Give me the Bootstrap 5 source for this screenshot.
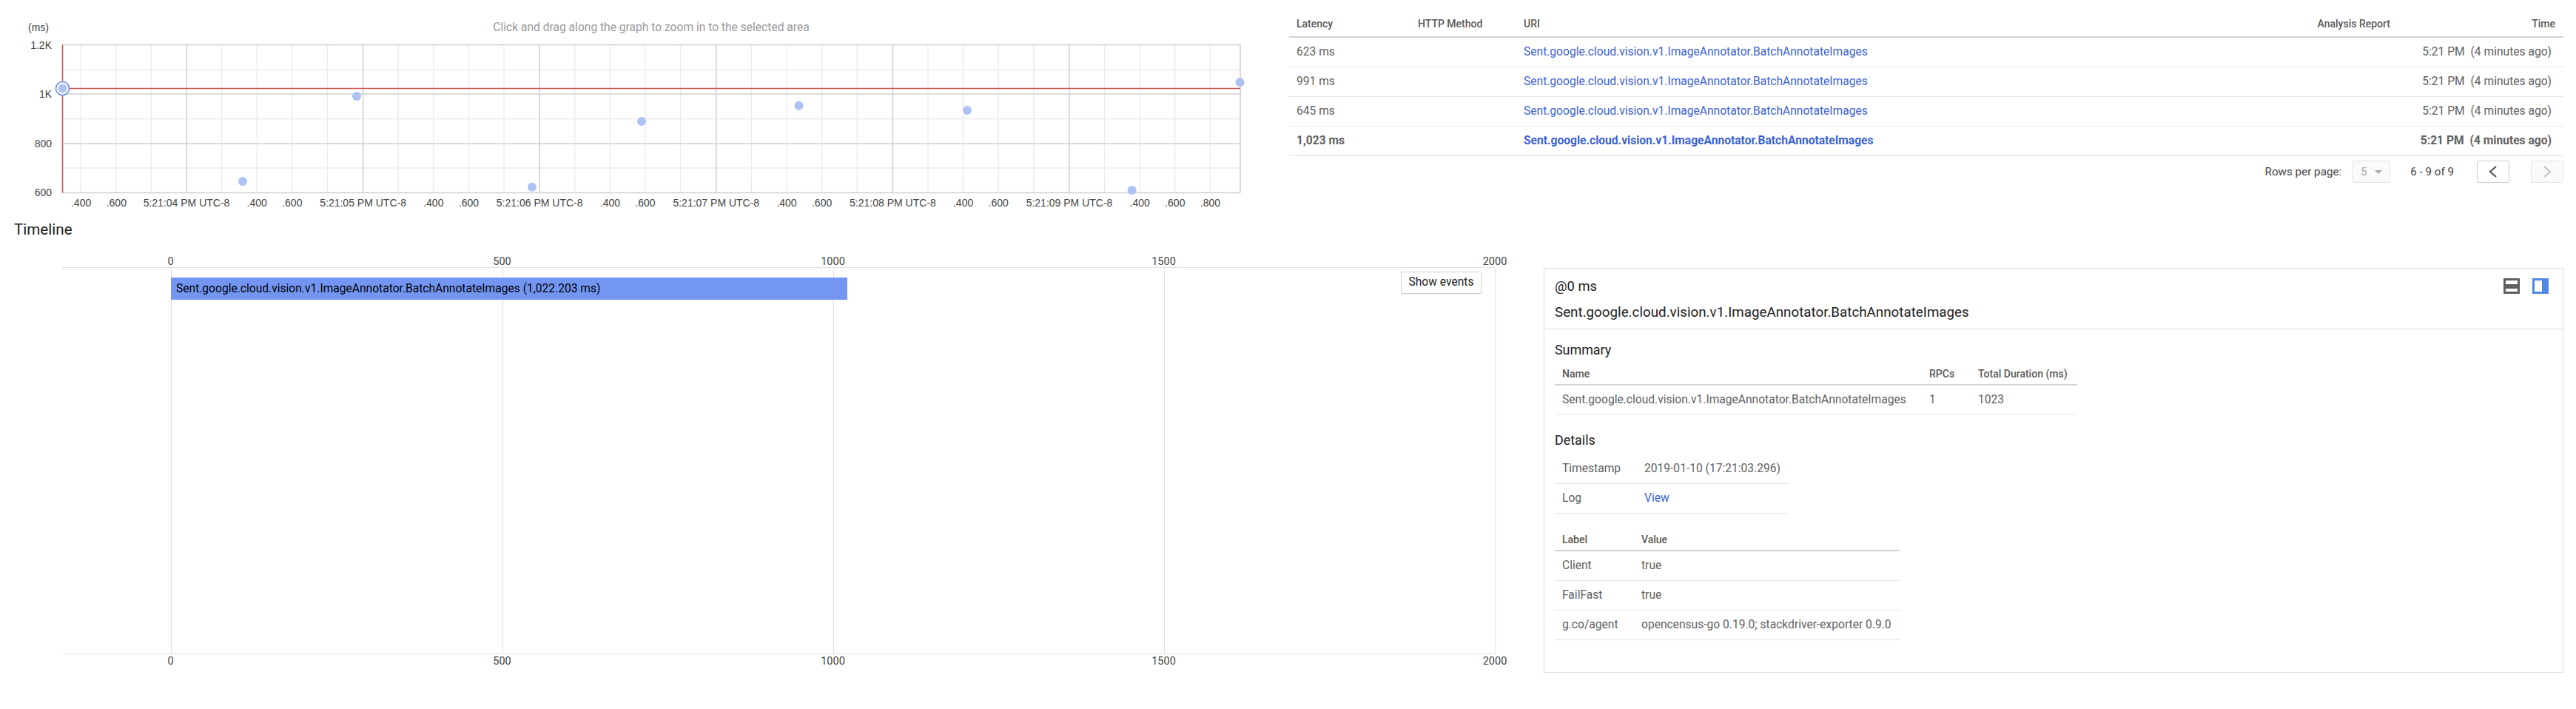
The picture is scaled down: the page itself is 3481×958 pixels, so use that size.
<!DOCTYPE html>
<html lang="en">
<head>
  <meta charset="UTF-8" />
  <title>Trace details</title>
  <link href="https://cdn.jsdelivr.net/npm/bootstrap@5.3.2/dist/css/bootstrap.min.css" rel="stylesheet">
  <style>
    body { font-family: Roboto, "Liberation Sans", sans-serif; font-size: 15.6px; color: #616161; background: #fff; width: 3481px; height: 958px; overflow: hidden; }
    svg text { font-family: "Liberation Sans", Arial, sans-serif; font-size: 14px; fill: #444; }
    svg.time-axis text { font-family: Roboto, sans-serif; font-size: 14.5px; }
    .top-row { height: 290px; }
    .scatter-col { width: 1742px; }
    .list-col { width: 1722px; padding-top: 14px; }
    .trace-table { table-layout: fixed; margin: 0; }
    .trace-table > :not(caption) > * > * { padding: 1px 10px 0; height: 40px; vertical-align: middle; border-bottom: 1px solid #e4e4e4; color: #616161; font-weight: 400; box-shadow: none; white-space: nowrap; }
    .trace-table > thead > tr > th { font-weight: 500; height: 30px; border-bottom: 2px solid #d4d4d4; color: #5a5a5a; font-size: 14px; }
    .trace-table a { color: #3b62d6; text-decoration: none; }
    .trace-table .sel-row td, .trace-table .sel-row a { font-weight: 700; }
    .list-table > thead > tr > th { height: 36px; }
    .col-lat { width: 164px; } .col-http { width: 143px; } .col-report { width: 200px; } .col-time { width: 224px; }
    .time-head { padding-right: 11px !important; }
    .time-cell { padding-right: 16px !important; }
    .pager-row { height: 42px; color: #444; padding-top: 1px; font-size: 15.2px; }
    .rows-select { width: 51px; height: 30px; background: #fafafa; border: 1px solid #e2e2e2; border-radius: 2px; color: #aaa; padding: 0 10px; margin-left: 15px; }
    .rows-caret { width: 0; height: 0; border-left: 5px solid transparent; border-right: 5px solid transparent; border-top: 5px solid #aaa; }
    .pager-count { margin-left: 27px; margin-right: 31px; }
    .page-btn { width: 44px; height: 30px; padding: 0; background: #fff; border: 1px solid #ccc; border-radius: 2px; display: flex; align-items: center; justify-content: center; }
    .page-btn:disabled { background: #fafafa; border-color: #e2e2e2; opacity: 1; }
    .page-btn + .page-btn { margin-left: 29px; }
    .timeline-title { height: 40px; line-height: 41px; padding-left: 19px; font-size: 20.6px; color: #212121; }
    .timeline-col { width: 2086px; height: 628px; }
    .span-bar { left: 231px; top: 45px; height: 30px; background: #7396f3; color: #000; padding-left: 7px; line-height: 30px; white-space: nowrap; }
    .events-btn { left: 1893px; top: 37px; width: 109px; height: 30px; padding: 0 0 1px; font-size: 15.6px; color: #222; background: #fff; border: 1px solid #d0d0d0; border-radius: 2px; box-shadow: 0 1px 1px rgba(0,0,0,.08); }
    .detail-panel { width: 1378px; height: 547px; margin-top: 32px; border: 1.5px solid #ddd; }
    .panel-head { height: 82px; padding: 13px 14px 0; border-bottom: 1.5px solid #ddd; color: #212121; }
    .panel-at { font-size: 18.4px; line-height: 22px; }
    .panel-name { font-size: 18.8px; line-height: 24px; margin-top: 12px; }
    .view-icons { margin: 13px 19px 0 0; }
    .ms-icon { margin-left: 17px; }
    .panel-body-in { padding: 0 14px; }
    .sect-title { font-size: 17.9px; line-height: 20px; color: #212121; }
    .sect-sum { margin-top: 18px; margin-bottom: 7px; }
    .sect-det { margin-top: 24px; margin-bottom: 9px; }
    .sum-table { width: 706px; } .sum-name { width: 496px; } .sum-rpc { width: 66px; }
    .info-table { width: 316px; } .info-key { width: 111px; }
    .label-table { width: 466px; margin-top: 20px; } .label-key { width: 107px; }
  </style>
</head>
<body>
  <div class="d-flex top-row">
    <div class="scatter-col">
      <svg id="scatter" class="d-block" width="1742" height="290"></svg>
    </div>
    <div class="list-col">
      <table class="table trace-table list-table">
        <thead>
          <tr>
            <th class="col-lat">Latency</th>
            <th class="col-http">HTTP Method</th>
            <th>URI</th>
            <th class="col-report text-end">Analysis Report</th>
            <th class="col-time text-end time-head">Time</th>
          </tr>
        </thead>
        <tbody>
          <tr><td>623 ms</td><td></td><td><a href="#">Sent.google.cloud.vision.v1.ImageAnnotator.BatchAnnotateImages</a></td><td></td><td class="text-end time-cell">5:21 PM <span class="ms-1">(4 minutes ago)</span></td></tr>
          <tr><td>991 ms</td><td></td><td><a href="#">Sent.google.cloud.vision.v1.ImageAnnotator.BatchAnnotateImages</a></td><td></td><td class="text-end time-cell">5:21 PM <span class="ms-1">(4 minutes ago)</span></td></tr>
          <tr><td>645 ms</td><td></td><td><a href="#">Sent.google.cloud.vision.v1.ImageAnnotator.BatchAnnotateImages</a></td><td></td><td class="text-end time-cell">5:21 PM <span class="ms-1">(4 minutes ago)</span></td></tr>
          <tr class="sel-row"><td>1,023 ms</td><td></td><td><a href="#">Sent.google.cloud.vision.v1.ImageAnnotator.BatchAnnotateImages</a></td><td></td><td class="text-end time-cell">5:21 PM <span class="ms-1">(4 minutes ago)</span></td></tr>
        </tbody>
      </table>
      <div class="d-flex align-items-center justify-content-end pager-row">
        <span>Rows per page:</span>
        <div class="rows-select d-flex align-items-center justify-content-between"><span>5</span><span class="rows-caret"></span></div>
        <span class="pager-count">6 - 9 of 9</span>
        <button class="page-btn" aria-label="Previous">
          <svg width="14" height="18" viewBox="0 0 14 18"><polyline points="11,2 3,9 11,16" fill="none" stroke="#555" stroke-width="2.2"/></svg>
        </button>
        <button class="page-btn" aria-label="Next" disabled>
          <svg width="14" height="18" viewBox="0 0 14 18"><polyline points="3,2 11,9 3,16" fill="none" stroke="#c4c4c4" stroke-width="2.2"/></svg>
        </button>
      </div>
    </div>
  </div>

  <div class="timeline-title">Timeline</div>

  <div class="d-flex">
    <div class="timeline-col position-relative">
      <svg id="timeline" class="time-axis d-block" width="2086" height="628"></svg>
      <div class="span-bar position-absolute" style="width: 914px">Sent.google.cloud.vision.v1.ImageAnnotator.BatchAnnotateImages (1,022.203 ms)</div>
      <button class="btn events-btn position-absolute">Show events</button>
    </div>

    <div class="detail-panel">
      <div class="panel-head position-relative">
        <div class="panel-at">@0 ms</div>
        <div class="panel-name">Sent.google.cloud.vision.v1.ImageAnnotator.BatchAnnotateImages</div>
        <div class="d-flex position-absolute top-0 end-0 view-icons">
          <svg width="22" height="21" viewBox="0 0 22 21"><rect width="22" height="21" fill="#5f5f5f"/><rect x="3" y="3" width="16" height="5" fill="#fff"/><rect x="3" y="14" width="16" height="4" fill="#fff"/></svg>
          <svg class="ms-icon" width="22" height="21" viewBox="0 0 22 21"><rect width="22" height="21" fill="#5187e4"/><rect x="3" y="3" width="10" height="15" fill="#fff"/></svg>
        </div>
      </div>
      <div class="panel-body-in">
        <div class="sect-title sect-sum">Summary</div>
        <table class="table trace-table sum-table">
          <thead><tr><th class="sum-name">Name</th><th class="sum-rpc">RPCs</th><th>Total Duration (ms)</th></tr></thead>
          <tbody><tr><td>Sent.google.cloud.vision.v1.ImageAnnotator.BatchAnnotateImages</td><td>1</td><td>1023</td></tr></tbody>
        </table>
        <div class="sect-title sect-det">Details</div>
        <table class="table trace-table info-table">
          <tbody>
            <tr><td class="info-key">Timestamp</td><td>2019-01-10 (17:21:03.296)</td></tr>
            <tr><td class="info-key">Log</td><td><a href="#">View</a></td></tr>
          </tbody>
        </table>
        <table class="table trace-table label-table">
          <thead><tr><th class="label-key">Label</th><th>Value</th></tr></thead>
          <tbody>
            <tr><td>Client</td><td>true</td></tr>
            <tr><td>FailFast</td><td>true</td></tr>
            <tr><td>g.co/agent</td><td>opencensus-go 0.19.0; stackdriver-exporter 0.9.0</td></tr>
          </tbody>
        </table>
      </div>
    </div>
  </div>

  <script>
    function line(x1, y1, x2, y2, color, w) {
      return `<line x1="${x1}" y1="${y1}" x2="${x2}" y2="${y2}" stroke="${color}" stroke-width="${w}"/>`;
    }

    // latency scatter
    const L = 84, R = 1676, T = 60.5, B = 260.5;
    let s = "";
    [94, 160.5, 227].forEach(y => s += line(L, y, R, y, "#ebebeb", 1.3));
    const majors = [252, 490.6, 729.2, 967.8, 1206.4, 1445];
    const minors = [109.2, 156.8, 204.4];
    majors.forEach(m => {
      [47.6, 95.2, 142.8, 190.4].forEach(d => minors.push(m + d));
    });
    minors.forEach(x => s += line(x, T, x, B, "#ebebeb", 1.3));
    majors.forEach(x => s += line(x, T, x, B, "#cfcfcf", 1.5));
    [T, 127, 194, B].forEach(y => s += line(L, y, R, y, "#d0d0d0", 1.6));
    s += line(R, T, R, B, "#d0d0d0", 1.6);
    s += line(L, 119.5, R, 119.5, "#cf5049", 1.5);
    s += line(84.5, T, 84.5, B, "#cf5049", 1.5);

    [["1.2K", 61], ["1K", 127], ["800", 194], ["600", 260]].forEach(([t, y]) => {
      s += `<text x="70" y="${y + 5}" text-anchor="end">${t}</text>`;
    });
    s += `<text x="38" y="42">(ms)</text>`;
    s += `<text x="880" y="42" text-anchor="middle" style="fill:#999;font-family:Roboto;font-size:15.6px">Click and drag along the graph to zoom in to the selected area</text>`;

    const times = ["5:21:04", "5:21:05", "5:21:06", "5:21:07", "5:21:08", "5:21:09"];
    [[109.6, ".400"], [157.3, ".600"]].forEach(([x, t]) => s += `<text x="${x}" y="279" text-anchor="middle">${t}</text>`);
    majors.forEach((m, i) => {
      s += `<text x="${m}" y="279" text-anchor="middle">${times[i]} PM UTC-8</text>`;
      s += `<text x="${m + 95.2}" y="279" text-anchor="middle">.400</text>`;
      s += `<text x="${m + 142.8}" y="279" text-anchor="middle">.600</text>`;
    });
    s += `<text x="${1445 + 190.4}" y="279" text-anchor="middle">.800</text>`;

    [[328, 245], [482, 130], [719, 252.7], [867, 164], [1079.6, 142.7], [1307, 149], [1529.7, 257], [1675.5, 111.3]].forEach(([x, y]) => {
      s += `<circle cx="${x}" cy="${y}" r="6" fill="#aec2f6"/>`;
    });
    s += `<circle cx="84.5" cy="119.5" r="9" fill="#fff" stroke="#5f8cf0" stroke-width="1.5"/><circle cx="84.5" cy="119.5" r="6" fill="#aec2f6"/>`;
    document.getElementById("scatter").innerHTML = s;

    // timeline axis
    let t = "";
    const top_ = 32, bot = 554;
    t += line(84, top_ - .5, 2021, top_ - .5, "#e0e0e0", 1);
    t += line(84, bot - .5, 2021, bot - .5, "#e0e0e0", 1);
    [[231.5, "0"], [679.5, "500"], [1126.5, "1000"], [1573.5, "1500"], [2021, "2000"]].forEach(([x, lbl]) => {
      t += line(x, top_, x, bot, "#e0e0e0", 1);
      t += `<text x="${x - 1}" y="28" text-anchor="middle">${lbl}</text>`;
      t += `<text x="${x - 1}" y="568" text-anchor="middle">${lbl}</text>`;
    });
    document.getElementById("timeline").innerHTML = t;
  </script>
  <script src="https://cdn.jsdelivr.net/npm/bootstrap@5.3.2/dist/js/bootstrap.bundle.min.js"></script>
</body>
</html>
